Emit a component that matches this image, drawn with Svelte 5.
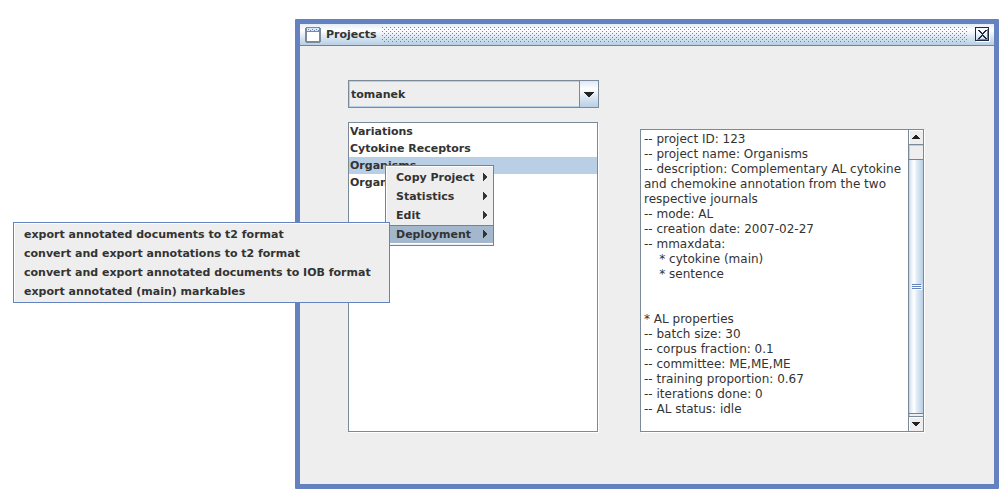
<script>
  const projects = ['Variations', 'Cytokine Receptors', 'Organisms', 'Organisms'];
  const menu = ['Copy Project', 'Statistics', 'Edit', 'Deployment'];
  const deployment = [
    'export annotated documents to t2 format',
    'convert and export annotations to t2 format',
    'convert and export annotated documents to IOB format',
    'export annotated (main) markables'
  ];
  const details = `-- project ID: 123
-- project name: Organisms
-- description: Complementary AL cytokine and chemokine annotation from the two respective journals
-- mode: AL
-- creation date: 2007-02-27
-- mmaxdata:
    * cytokine (main)
    * sentence


* AL properties
-- batch size: 30
-- corpus fraction: 0.1
-- committee: ME,ME,ME
-- training proportion: 0.67
-- iterations done: 0
-- AL status: idle`;
  let selected = $state(2);
  let active = $state(3);
</script>

<main>
  <section class="window" aria-label="Projects">
    <header>
      <svg class="appicon" width="16" height="16" viewBox="0 0 16 16" shape-rendering="crispEdges" aria-hidden="true">
        <path fill="#7a8a99" d="M1 0h14v1h1v14h-1v1H1v-1H0V1h1z" />
        <path fill="#dde8f3" d="M2 1h12v3H2z" />
        <path fill="#6382bf" d="M3 2h1v1H3zM7 2h1v1H7zM11 2h1v1h-1zM5 3h1v1H5zM9 3h1v1H9zM13 3h1v1h-1z" />
        <path fill="#fff" d="M2 5h12v9H2z" />
      </svg>
      <h1>Projects</h1>
      <span class="grip"></span>
      <button class="close" aria-label="Close">
        <svg width="15" height="15" viewBox="0 0 15 15" shape-rendering="crispEdges" aria-hidden="true">
          <path fill="#fff" d="M14 1h1v14H1v-1h13z" />
          <path fill="#20283f" d="M0 0h14v1H1v13H0z" />
          <path fill="#6382bf" d="M2 12h10V2h1v11H2z" />
          <path fill="#20283f" d="M13 1h1v13H1v-1h12z" />
          <path fill="#20283f" d="M3 3h2v1h1v1h1v1h1V5h1V4h1V3h2v1h-1v1h-1v1H9v1H8v1h1v1h1v1h1v1h1v1h-2v-1H9v-1H8V9H7v1H6v1H5v1H3v-1h1v-1h1V9h1V8h1V7H6V6H5V5H4V4H3z" />
        </svg>
      </button>
    </header>

    <div class="body">
      <div class="left">
        <div class="combo">
          <select aria-label="User"><option>tomanek</option></select>
          <span class="drop" aria-hidden="true">
            <svg width="10" height="5" viewBox="0 0 10 5" shape-rendering="crispEdges"><path fill="#222" d="M0 0h10v1H9v1H8v1H7v1H6v1H4V4H3V3H2V2H1V1H0z" /></svg>
          </span>
        </div>
        <ul class="list">
          {#each projects as name, i}
            <li><button class:selected={selected === i} onclick={() => (selected = i)}>{name}</button></li>
          {/each}
        </ul>
      </div>

      <div class="details">
        <textarea readonly aria-label="Project details" value={details}></textarea>
        <div class="scroll">
          <button class="up" aria-label="Scroll up">
            <svg width="8" height="4" viewBox="0 0 8 4" shape-rendering="crispEdges"><path fill="#222" d="M3 0h2v1h1v1h1v1h1v1H0V3h1V2h1V1h1z" /></svg>
          </button>
          <div class="track"><div class="thumb"><i></i><i></i><i></i></div></div>
          <button class="down" aria-label="Scroll down">
            <svg width="8" height="4" viewBox="0 0 8 4" shape-rendering="crispEdges"><path fill="#222" d="M0 0h8v1H7v1H6v1H5v1H3V3H2V2H1V1H0z" /></svg>
          </button>
        </div>
      </div>
    </div>
  </section>

  <div class="popup context" role="menu" aria-label="Project">
    {#each menu as item, i}
      <button role="menuitem" class:active={active === i} onclick={() => (active = i)}>
        {item}
        <svg width="5" height="9" viewBox="0 0 5 9" shape-rendering="crispEdges" aria-hidden="true"><path fill="#333" d="M0 0h1v1h1v1h1v1h1v2H3v1H2v1H1v1H0z" /></svg>
      </button>
    {/each}
  </div>

  <div class="popup sub" role="menu" aria-label="Deployment">
    {#each deployment as item}
      <button role="menuitem">{item}</button>
    {/each}
  </div>
</main>

<style>
  :global(body) { margin: 0; background: #fff; }
  main {
    position: relative;
    padding: 19px 6px 9px 295px;
    font: bold 11px/17px "DejaVu Sans", sans-serif;
    color: #333;
  }
  button, select, textarea {
    appearance: none;
    margin: 0;
    padding: 0;
    border: 0;
    border-radius: 0;
    background: none;
    font: inherit;
    color: inherit;
    text-align: left;
    outline: 0;
  }
  .window { border: 5px solid #6382bf; border-radius: 1px; background: #eee; }
  header {
    display: flex;
    align-items: center;
    height: 21px;
    padding: 0 4px 0 5px;
    border-bottom: 1px solid #6382bf;
    background: linear-gradient(#e4edf6, #fff 30%, #dde8f3 60%, #b8cfe5);
  }
  .appicon { display: block; }
  h1 { margin: 0 5px; font: inherit; }
  .grip {
    flex: 1;
    height: 16px;
    margin-right: 7px;
    background:
      conic-gradient(from 270deg at 1px 1px, #6382bf 90deg, transparent 0) 0 0 / 4px 4px,
      conic-gradient(from 270deg at 1px 1px, #6382bf 90deg, transparent 0) 2px 2px / 4px 4px;
  }
  .close { display: flex; }
  .body {
    display: grid;
    grid-template-columns: minmax(0, 251fr) minmax(0, 284fr);
    column-gap: 41px;
    align-items: end;
    padding: 34px 70px 52px 48px;
  }
  .left { display: grid; gap: 14px; }
  .combo { position: relative; display: flex; }
  .combo select {
    flex: 1;
    height: 28px;
    padding: 0 22px 0 2px;
    border: 1px solid #7a8a99;
    box-shadow: inset 1px 1px #b8cfe5, inset 0 -1px #b8cfe5;
  }
  .drop {
    position: absolute;
    inset: 1px 1px 1px auto;
    width: 18px;
    display: flex;
    align-items: center;
    justify-content: center;
    border-left: 1px solid #7a8a99;
    background: linear-gradient(#dde8f3, #fff 30%, #dde8f3 60%, #b8cfe5);
    pointer-events: none;
  }
  .list {
    min-height: 308px;
    margin: 0 1px 0 0;
    padding: 0;
    list-style: none;
    border: 1px solid #7a8a99;
    background: #fff;
    box-shadow: 1px 1px #fff;
  }
  .list li { display: flex; }
  .list button { flex: 1; height: 17px; padding-left: 1px; }
  .list .selected { background: #b8cfe5; }
  .details {
    display: flex;
    height: 301px;
    border: 1px solid #7a8a99;
    background: #fff;
    box-shadow: 1px 1px #fff;
  }
  textarea {
    flex: 1;
    min-width: 0;
    padding: 2px 3px;
    resize: none;
    overflow: hidden;
    font-weight: normal;
    font-size: 12px;
    line-height: 15px;
  }
  .scroll { display: flex; flex-direction: column; width: 14px; border-left: 1px solid #7a8a99; background: #eee; }
  .scroll button { display: flex; align-items: center; justify-content: center; height: 15px; box-shadow: inset 1px 1px #fff; }
  .scroll .up { border-bottom: 1px solid #7a8a99; }
  .scroll .down { border-top: 1px solid #7a8a99; }
  .track { flex: 1; display: flex; padding: 14px 0 2px; box-shadow: inset 1px 1px #b8cfe5; }
  .thumb {
    flex: 1;
    display: flex;
    flex-direction: column;
    align-items: center;
    justify-content: center;
    gap: 1px;
    border: solid #6382bf;
    border-width: 1px 0;
    background: linear-gradient(90deg, #b8cfe5, #dde8f3 10%, #fff 35%, #dde8f3 60%, #b8cfe5);
  }
  .thumb i { width: 9px; height: 1px; background: #6382bf; box-shadow: 1px 1px #fff; }
  .popup {
    position: absolute;
    box-sizing: border-box;
    display: flex;
    flex-direction: column;
    padding: 2px 0 1px 1px;
    border: 1px solid #6382bf;
    background: #eee;
    box-shadow: inset 1px 1px #fff;
  }
  .popup button { display: flex; align-items: center; height: 19px; padding: 0 5px 0 9px; white-space: nowrap; }
  .popup svg { margin-left: auto; }
  .popup .active { background: #a3b8cc; box-shadow: inset 0 1px #6382bf, inset 0 -1px #fff; }
  .context { left: 385px; top: 165px; width: 109px; }
  .sub { left: 13px; top: 222px; width: 377px; }
</style>
